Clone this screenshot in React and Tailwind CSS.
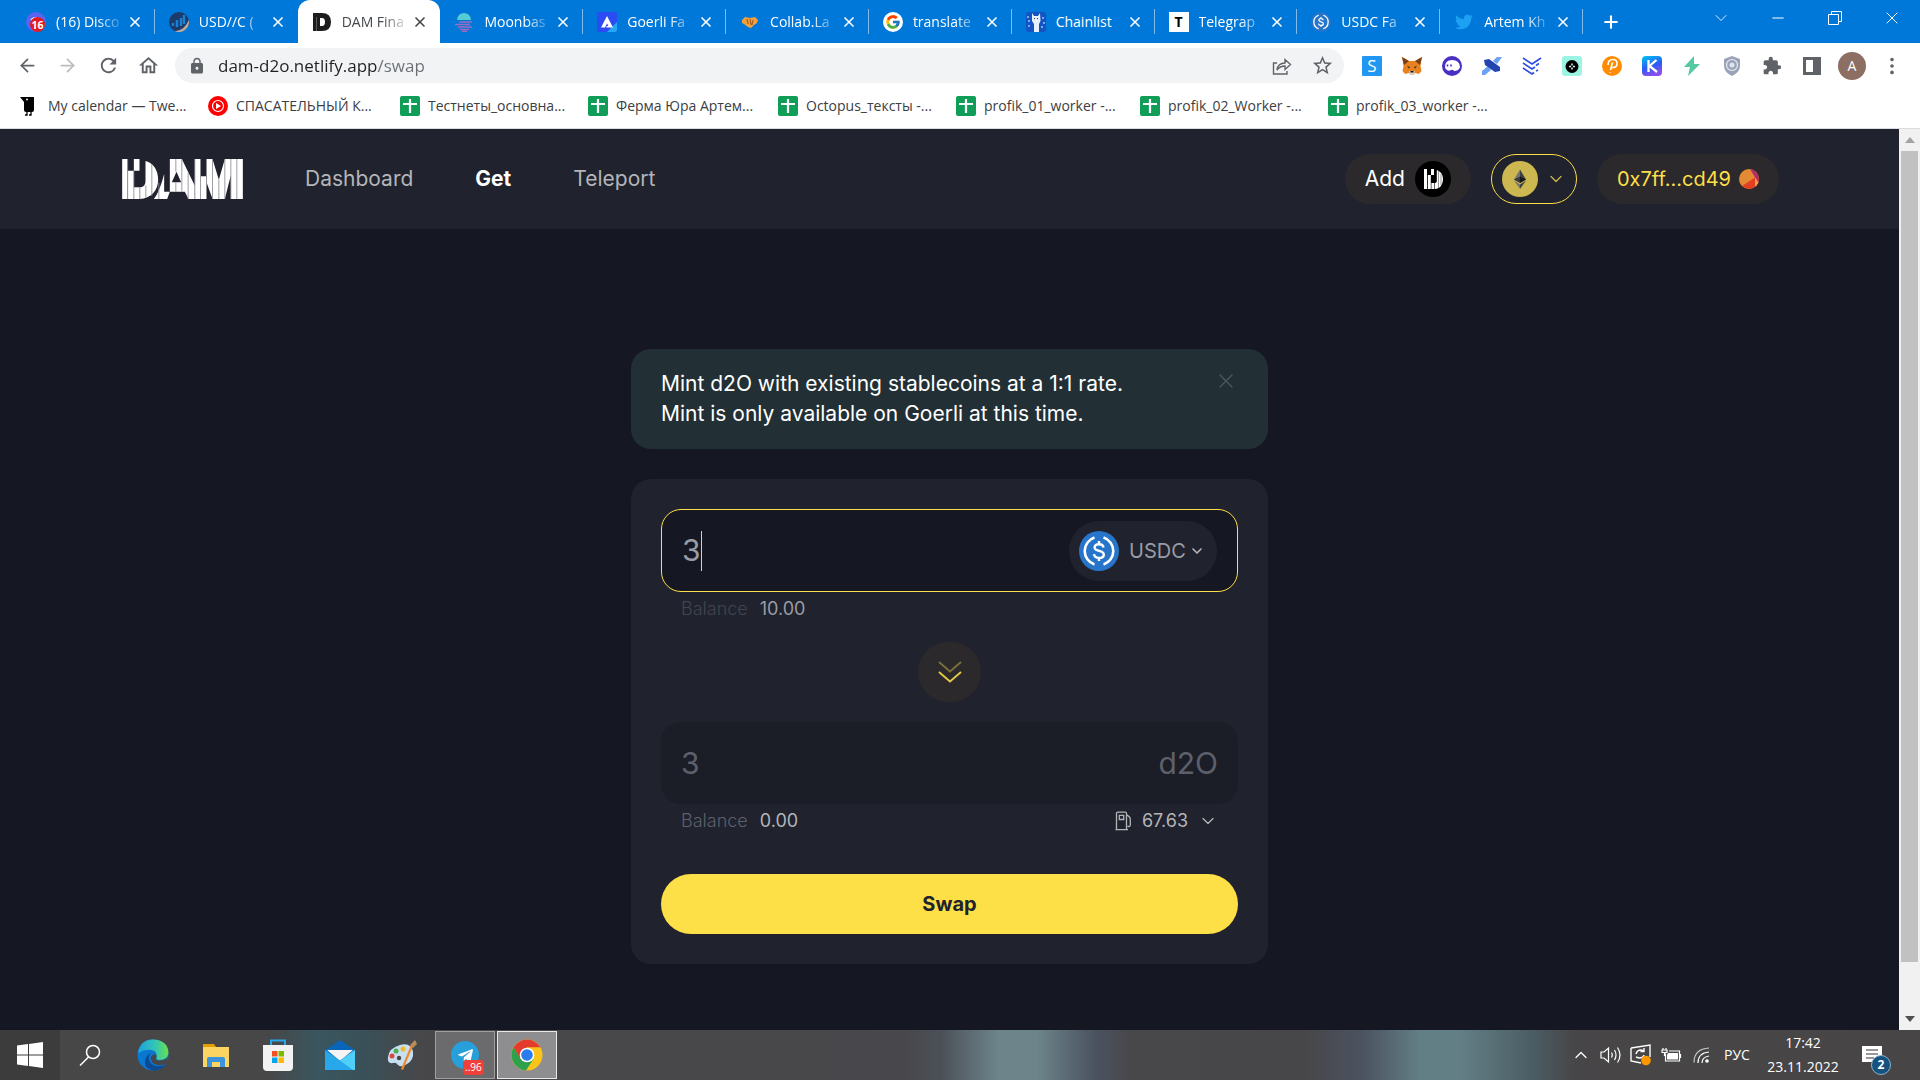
// src/App.jsx
import { useState } from "react";
import {
    ArrowLeft,
    ArrowRight,
    ChevronDown,
    ChevronUp,
    EllipsisVertical,
    Minus,
    Plus,
    X,
} from "lucide-react";
import { FcGoogle } from "react-icons/fc";
import { FaTwitter, FaTelegramPlane } from "react-icons/fa";
import { MdRefresh, MdLock, MdExtension, MdOutlineHome, MdStarBorder } from "react-icons/md";

/* ---------- logos ---------- */

const DamLogo = () => (
    <svg viewBox="22 27 362 120" className="w-[121px] h-10" fill="#fff" aria-label="DAM">
        <path d="M22 27h16v120H22zM39 62h18v85H39zM57 27h17v35H57zM57 112h18v35H57z" />
        <path d="M92 33c25 6 38 30 38 56 0 32-22 56-55 58v-35c12-1 17-8 17-20z" />
        <path d="M148 72v75h-31c12-14 22-42 31-75zM148 125h17l-8 22h-9z" />
        <path fillRule="evenodd" d="M165 27h36l39 80v40h-19l-11-22h-45zM185 65l-14 32h28z" />
        <path d="M240 27h17v120h-17zM257 79h18v68h-18z" />
        <path d="M275 27h18l19 62 18-62h54v120h-36V76l-18 71h-37l-18-50z" />
        <path
            d="M38.500 27v120M57 62v85M75 112v35M93 106v37M111 42v96M132 98v49M183 27v38M183 97v28M201 27v98M220 68v79M240 27v120M257 27v120M275 27v120M293 27v120M312 90v57M330 27v120M348 27v120M366 27v120"
            stroke="#8b8c93"
            strokeWidth="2.500"
            fill="none"
        />
    </svg>
);

const DamCoin = () => (
    <svg viewBox="0 0 36 36" className="size-9">
        <circle cx="18" cy="18" r="18" fill="#000" />
        <path
            d="M9 8h3v20H9zM12.800 14h3v14h-3zM16 8h3v6h-3zM16.400 22h3v6h-3zM20 8.500c5 1 8 4.500 8 9.500 0 6-3.500 10-8 10v-6c1.500 0 1.800-1 1.800-2.500V9z"
            fill="#fff"
        />
        <path d="M23.500 10v17M26 13v11" stroke="#555" strokeWidth=".6" />
    </svg>
);

const EthCoin = () => (
    <svg viewBox="0 0 36 36" className="size-9">
        <circle cx="18" cy="18" r="18" fill="#cdb750" />
        <path d="M18 8.500v13.500l-6-3.600z" fill="#74746f" />
        <path d="M18 8.500v13.500l6-3.600z" fill="#3f4042" />
        <path d="M18 15.500v6.500l-6-3.600z" fill="#3a3a3b" />
        <path d="M18 15.500v6.500l6-3.600z" fill="#17181b" />
        <path d="M18 23.500V28l-6-8.400z" fill="#74746f" />
        <path d="M18 23.500V28l6-8.400z" fill="#3f4042" />
    </svg>
);

const WalletAvatar = () => (
    <svg viewBox="0 0 20 20" className="size-5">
        <clipPath id="avatar">
            <circle cx="10" cy="10" r="10" />
        </clipPath>
        <g clipPath="url(#avatar)">
            <path d="M0 0h20v20H0z" fill="#e58a34" />
            <path d="M11 0l9 15V0z" fill="#b62c66" />
            <path d="M16 8.500L3 17l5 3h8z" fill="#e33f22" />
            <path d="M16 8.500l4 6-4 5.500z" fill="#f0a03c" />
        </g>
    </svg>
);

const UsdcCoin = ({ className }) => (
    <svg viewBox="0 0 40 40" className={className} fill="none" stroke="#fff">
        <circle cx="20" cy="20" r="20" fill="#2775ca" stroke="none" />
        <path d="M15.500 6.500a14.200 14.200 0 0 0 0 27M24.500 6.500a14.200 14.200 0 0 1 0 27" strokeWidth="2.600" />
        <path
            d="M24.500 16.500c-.3-2.300-2-3.300-4.500-3.300-2.700 0-4.400 1.200-4.400 3.200 0 4.600 9.200 2.200 9.200 7 0 2.200-1.900 3.500-4.800 3.500-2.800 0-4.700-1.200-5-3.700M20 10v3.400M20 26.600V30"
            strokeWidth="2.400"
        />
    </svg>
);

const DoubleArrow = () => (
    <svg viewBox="0 0 24 24" className="size-6" fill="none" strokeWidth="1.800">
        <path d="M1 2l11 9.500L23 2" stroke="#7d7038" />
        <path d="M1 12l11 9.500L23 12" stroke="#e6cb48" />
    </svg>
);

const GasPump = () => (
    <svg viewBox="0 0 17 20" className="w-[17px] h-5" fill="none" stroke="#b4b5b8" strokeWidth="1.300">
        <path d="M1.500 18.500V2.500q0-1.300 1.300-1.300h7.400q1.300 0 1.300 1.300v16M.5 18.700h12.500M4.300 4.300h4.400v4.200H4.300zM11.500 3.500l3 2.500q.8 1 .8 3v5q0 1.500-1.400 1.500h-1.400" />
    </svg>
);

/* ---------- browser icons ---------- */

const DiscordIcon = () => (
    <svg viewBox="0 0 20 20" className="size-5">
        <circle cx="10" cy="10" r="10" fill="#5865f2" />
        <path d="M5 8q5-4 10 0" stroke="#fff" strokeWidth="2" fill="none" />
        <circle cx="11.500" cy="12.500" r="7.500" fill="#e01b24" />
        <text x="11.500" y="16.500" textAnchor="middle" fontSize="10.500" fontWeight="700" fill="#fff">16</text>
    </svg>
);

const UsdChartIcon = () => (
    <svg viewBox="0 0 20 20" className="size-5">
        <circle cx="10" cy="10" r="10" fill="#1e3a6b" />
        <path d="M4 11v3M8 8v7M12 6v8M15 3v9" stroke="#1583d8" strokeWidth="2.400" />
        <path d="M19.800 8A10 10 0 0 1 6 19.200Q16 18 19.800 8z" fill="#b5a9a0" />
    </svg>
);

const DamTabIcon = () => (
    <svg viewBox="0 0 20 20" className="size-5">
        <path fillRule="evenodd" d="M1 1h9q9 0 9 9t-9 9H1zM8 6v8h2q3 0 3-4t-3-4z" fill="#1d1d1d" />
        <path d="M4.500 5v14" stroke="#777" strokeWidth=".7" />
    </svg>
);

const MoonbaseIcon = () => (
    <svg viewBox="0 0 20 20" className="size-5">
        <path d="M3 8a7 7 0 0 1 14 0z" fill="#55cbd3" />
        <path d="M5 10h13M1 12.500h15M4 15h14M6 17.500h9M8 19.500h5" stroke="#9d6bc0" strokeWidth="1.300" />
    </svg>
);

const GoerliIcon = () => (
    <svg viewBox="0 0 20 20" className="size-5">
        <rect width="20" height="20" rx="2" fill="#2b4cf5" />
        <path d="M10 20h8q2 0 2-2v-8z" fill="#25a7f8" />
        <path d="M10 4L4 15.500h4l2-4 1.500 2.500h-2v1.500H16z" fill="#fff" />
    </svg>
);

const CollabIcon = () => (
    <svg viewBox="0 0 20 20" className="size-5">
        <path d="M2 8l3-3 5 1 5-1 3 3-1 3-3 2-3 3-3-1-4-3-2-1z" fill="#f0a03c" />
        <path d="M7 7l1 5M10 7l1 6M13 8l-1 5" stroke="#a85a1e" strokeWidth="1.200" />
    </svg>
);

const ChainlistIcon = () => (
    <svg viewBox="0 0 20 20" className="size-5">
        <rect width="20" height="20" rx="3" fill="#1453c4" />
        <path d="M6 1l2 3h4l2-3 .5 8L13 12v8H8v-8L6 9z" fill="#e8f1fb" />
        <path d="M2 5v.1M3 9v.1M17 6v.1M18 11v.1M3 14v.1M16 15v.1" stroke="#9cc4f5" strokeWidth="2" strokeLinecap="round" />
        <path d="M8.500 6.500v.1M11.500 6.500v.1" stroke="#222" strokeWidth="1.200" strokeLinecap="round" />
    </svg>
);

const TelegraphIcon = () => (
    <span className="size-5 bg-white text-black text-sm leading-5 font-bold text-center">T</span>
);

const CalendarBird = () => (
    <svg viewBox="0 0 20 20" className="size-5">
        <path d="M0 1h14v13q0 2-2 2H6q-2 0-2-2V6z" fill="#000" />
        <path d="M7 16v3H5M11 16v3H9" stroke="#000" strokeWidth="1.300" fill="none" />
        <circle cx="7" cy="3.500" r=".9" fill="#fff" />
    </svg>
);

const MusicIcon = () => (
    <svg viewBox="0 0 20 20" className="size-5">
        <circle cx="10" cy="10" r="10" fill="#f00" />
        <circle cx="10" cy="10" r="5.500" fill="none" stroke="#fff" strokeWidth="1.200" />
        <path d="M8 7l5 3-5 3z" fill="#fff" />
    </svg>
);

const SheetIcon = () => (
    <svg viewBox="0 0 20 20" className="size-5">
        <rect width="20" height="20" rx="2" fill="#0f9d58" />
        <path d="M10 3v14M3 8h14" stroke="#fff" strokeWidth="2.200" />
    </svg>
);

const ShareIcon = () => (
    <svg viewBox="0 0 20 20" className="size-5" fill="none" stroke="#5f6368" strokeWidth="1.400">
        <path d="M5 7H1.500v11H15v-3M5 14q1-7 8-7V3.500l5.500 5-5.500 5V10q-5 0-8 4z" />
    </svg>
);

const ext = {
    s: (
        <svg viewBox="0 0 20 20" className="size-5">
            <rect width="20" height="20" rx="1" fill="#2196f3" />
            <text x="10" y="16" textAnchor="middle" fontSize="17" fill="#fff">S</text>
        </svg>
    ),
    fox: (
        <svg viewBox="0 0 20 20" className="size-5">
            <path d="M0 1l7 4h6l7-4-1.500 9 1 5-2.500 3-4-1-2 2H9l-2-2-4 1-2.500-3 1-5z" fill="#e8821e" />
            <path d="M0 1l7 4-5 4zM20 1l-7 4 5 4z" fill="#7a3f16" />
            <path d="M5 10l3 1-1 1.500zM15 10l-3 1 1 1.500z" fill="#222" />
            <path d="M7 15h6l-1 4H8z" fill="#d9cdc4" />
            <path d="M8.500 15h3v1.500h-3z" fill="#161616" />
        </svg>
    ),
    ghost: (
        <svg viewBox="0 0 20 20" className="size-5">
            <circle cx="10" cy="10" r="10" fill="#4b2fc4" />
            <path d="M3 11q0-7 7-7 7.500 0 8 7-1 4-6 4-1-2-4-.5-2 .5-3-.5-2-1-2-3z" fill="#fff" />
            <path d="M5.500 8.500v2M9 8.500v2" stroke="#4b2fc4" strokeWidth="1.600" />
        </svg>
    ),
    satellite: (
        <svg viewBox="0 0 20 20" className="size-5">
            <path d="M11 5l4-4h5l-5 7zM0 15l6-5 3 4-6 5H0z" fill="#6aa3f5" />
            <path d="M2 4l5-1 11 8v4l-5 1L3 9z" fill="#2444b0" />
        </svg>
    ),
    chevrons: (
        <svg viewBox="0 0 20 20" className="size-5" fill="none" stroke="#2f4fe0" strokeWidth="1.700">
            <path d="M1 2l9 6 9-6M1 7l9 6 3-2M1 12l9 6 2-1.500M14 9.500l3-2M14 15l2-1M17.500 12v.1" />
        </svg>
    ),
    okx: (
        <svg viewBox="0 0 20 20" className="size-5">
            <rect width="20" height="20" rx="3" fill="#9cf5e4" />
            <circle cx="10" cy="10.500" r="6.500" fill="#000" />
            <path d="M10 7.500v2M10 11.500v2M7 10.500h2M11 10.500h2" stroke="#cfeee8" strokeWidth="1.500" />
        </svg>
    ),
    polkadot: (
        <svg viewBox="0 0 20 20" className="size-5">
            <circle cx="10" cy="10" r="10" fill="#ff8c00" />
            <path d="M6 9q0-5.500 5-5.500 4 0 4 4T11 11.500H9.500M10.500 6.500L8.500 14M8 16v.8" fill="none" stroke="#fff" strokeWidth="1.600" />
        </svg>
    ),
    keplr: (
        <svg viewBox="0 0 20 20" className="size-5">
            <linearGradient id="keplr" x1="0" y1="0" x2=".4" y2="1">
                <stop offset="0" stopColor="#00c8f5" />
                <stop offset=".6" stopColor="#2a5cf0" />
                <stop offset="1" stopColor="#8a4ff0" />
            </linearGradient>
            <rect width="20" height="20" rx="4" fill="url(#keplr)" />
            <path d="M6.500 4v12M14.500 4l-7 6 7.500 6" stroke="#fff" strokeWidth="2.300" fill="none" />
        </svg>
    ),
    bolt: (
        <svg viewBox="0 0 20 20" className="size-5">
            <path d="M12 0L2 11h6l-2 9L18 8h-6z" fill="#55c9a0" />
        </svg>
    ),
    shield: (
        <svg viewBox="0 0 20 20" className="size-5">
            <path d="M10 0l8 3v7q0 6-8 10-8-4-8-10V3z" fill="#9aa3b8" />
            <circle cx="10" cy="9" r="5.500" fill="none" stroke="#e8ebf2" strokeWidth="1.200" />
            <circle cx="10" cy="9" r="2.500" fill="#dfe3ec" />
        </svg>
    ),
    puzzle: <MdExtension className="size-5 text-[#5f6368]" />,
    panel: (
        <svg viewBox="0 0 20 20" className="size-5">
            <path fillRule="evenodd" d="M1 1h18v18H1zM4 4v12h7V4z" fill="#5f6368" />
        </svg>
    ),
};

/* ---------- taskbar icons ---------- */

const WindowsIcon = () => (
    <svg viewBox="0 0 26 26" className="size-[26px]" fill="#fff">
        <path d="M0 3.500l11-1.500v10.500H0zM12 2l14-2v12.500H12zM0 13.500h11V24L0 22.500zM12 13.500h14V26l-14-2z" />
    </svg>
);

const SearchIcon = () => (
    <svg viewBox="0 0 22 22" className="size-[22px]" fill="none" stroke="#fff" strokeWidth="1.500">
        <circle cx="14" cy="8" r="6.500" />
        <path d="M9.500 13L1 21.500" />
    </svg>
);

const EdgeIcon = () => (
    <svg viewBox="0 0 32 32" className="size-8">
        <linearGradient id="edge" x1="0" x2="1">
            <stop offset="0" stopColor="#1ba0e2" />
            <stop offset=".6" stopColor="#35c8b0" />
            <stop offset="1" stopColor="#6be04a" />
        </linearGradient>
        <circle cx="16" cy="16" r="15.500" fill="#0b78d0" />
        <path d="M1 14Q3 .5 16 .5 31 1 31.500 14q-1 7-9 7-4 0-3-3 1-6-5-7-7-1-13 3z" fill="url(#edge)" />
        <path d="M14 14q-4 4-1 9t10 4q4 0 6-2-5 7-13 6.500Q7 30 8 22q1-6 6-8z" fill="#0c4a94" />
        <path d="M17 15q4 1 2 4-1 2 3 2.500 6 0 9-3l-1 6q-6 3-12 1-5-3-4-8z" fill="#474749" />
    </svg>
);

const FolderIcon = () => (
    <svg viewBox="0 0 28 28" className="size-7">
        <path d="M1 3h11l2 3H1z" fill="#e0a000" />
        <path d="M1 6h26v20H1z" fill="#fcd462" />
        <path d="M5 26v-8q0-2 2-2h14q2 0 2 2v8h-5v-5h-8v5z" fill="#3c94dd" />
    </svg>
);

const StoreIcon = () => (
    <svg viewBox="0 0 30 32" className="w-[30px] h-8">
        <path d="M8 7V1.500h14V7" fill="none" stroke="#28a8ea" strokeWidth="2" />
        <path d="M0 6h30v22q0 4-4 4H4q-4 0-4-4z" fill="#f2f2f2" />
        <path d="M9 12h5.500v5.500H9z" fill="#f25022" />
        <path d="M15.500 12H21v5.500h-5.500z" fill="#7fba00" />
        <path d="M9 18.500h5.500V24H9z" fill="#00a4ef" />
        <path d="M15.500 18.500H21V24h-5.500z" fill="#ffb900" />
    </svg>
);

const MailIcon = () => (
    <svg viewBox="0 0 30 32" className="w-[30px] h-8">
        <path d="M0 11L15 1l15 10v4H0z" fill="#0a64b8" />
        <path d="M2 11h26L15 22z" fill="#f4f4f4" />
        <path d="M0 11l15 10.500L30 11v20H0z" fill="#28a8ea" />
        <path d="M30 11L15 21.500 28 31h2z" fill="#50d0f8" />
    </svg>
);

const PaintIcon = () => (
    <svg viewBox="0 0 32 32" className="size-8">
        <path d="M14 6q11-3 13 7 1 8-6 12-6 4-9 1-2-3-5-2-6 1-5-6Q3 9 14 6z" fill="#c6e0f2" />
        <circle cx="6" cy="17" r="2.500" fill="#e0463c" />
        <circle cx="10" cy="12" r="2.500" fill="#4cae4f" />
        <circle cx="17" cy="10" r="2.500" fill="#f2b632" />
        <circle cx="13" cy="19" r="2.200" fill="#474749" />
        <path d="M25 6l2 1-10 24-2-1z" fill="#ef8a2b" />
        <path d="M24 6l5-5 2 4-4 4z" fill="#b98a5a" />
    </svg>
);

const ChromeIcon = () => (
    <svg viewBox="0 0 32 32" className="size-8">
        <circle cx="16" cy="16" r="15.500" fill="#fcc419" />
        <path d="M2.600 8.300A15.500 15.500 0 0 1 29.400 8.300H16L9 20z" fill="#e33b2e" />
        <path d="M2.600 8.300A15.500 15.500 0 0 0 15 31.500L22.500 20 9.500 20z" fill="#2da14b" />
        <circle cx="16" cy="16" r="7.300" fill="#fff" />
        <circle cx="16" cy="16" r="5.800" fill="#2a7bec" />
    </svg>
);

const SpeakerIcon = () => (
    <svg viewBox="0 0 22 20" className="w-[22px] h-5" fill="none" stroke="#fff" strokeWidth="1.200">
        <path d="M1 7h3l4.500-4v14L4 13H1zM11.500 7.500q1.500 2.500 0 5M14.500 5q3 5 0 10M17.500 2.500q5 7.500 0 15" />
    </svg>
);

const UpdateIcon = () => (
    <svg viewBox="0 0 22 22" className="size-[22px]" fill="none" stroke="#fff" strokeWidth="1.400">
        <path d="M1 4l19-3v12M1 4v13l10 2M6 10q1-4 5-4l3 1M14 4v3.500h-3.500M14 11q-1 3-5 3l-3-1" />
        <circle cx="16" cy="16.500" r="4.800" fill="#ff9800" stroke="none" />
    </svg>
);

const BatteryIcon = () => (
    <svg viewBox="0 0 21 16" className="w-[21px] h-4" fill="none" stroke="#fff" strokeWidth="1.200">
        <path d="M4.500 6.500V14h14V4H8" />
        <path d="M7 6h10v6.500H6V8z" fill="#fff" stroke="none" />
        <path d="M19.500 7v4M1 3h5v2.500H1zM2 3V1M5 3V1M3.500 5.500V9" />
    </svg>
);

const WifiIcon = () => (
    <svg viewBox="0 0 17 17" className="size-[17px]" fill="none" stroke="#fff" strokeWidth="1.200">
        <path d="M1 15.500Q1 2 16 1" strokeOpacity=".7" />
        <path d="M5 16Q5 6 16 5M9 16q0-6 7-7" />
        <circle cx="14" cy="14" r="1.800" fill="#fff" stroke="none" />
    </svg>
);

/* ---------- data ---------- */

const tabs = [
    { title: "(16) Disco", icon: <DiscordIcon /> },
    { title: "USD//C (", icon: <UsdChartIcon /> },
    { title: "DAM Fina", icon: <DamTabIcon />, active: true },
    { title: "Moonbas", icon: <MoonbaseIcon /> },
    { title: "Goerli Fa", icon: <GoerliIcon /> },
    { title: "Collab.La", icon: <CollabIcon /> },
    { title: "translate", icon: <FcGoogle className="size-5 rounded-full bg-white p-0.5" /> },
    { title: "Chainlist", icon: <ChainlistIcon />, full: true },
    { title: "Telegrap", icon: <TelegraphIcon /> },
    { title: "USDC Fa", icon: <UsdcCoin className="size-5" /> },
    { title: "Artem Kh", icon: <FaTwitter className="size-5 p-px text-[#1da1f2]" /> },
];

const bookmarks = [
    { title: "My calendar — Twe...", icon: <CalendarBird />, width: "w-[188px]" },
    { title: "СПАСАТЕЛЬНЫЙ К...", icon: <MusicIcon />, width: "w-[192px]" },
    { title: "Тестнеты_основна...", icon: <SheetIcon />, width: "w-[188px]" },
    { title: "Ферма Юра Артем...", icon: <SheetIcon />, width: "w-[190px]" },
    { title: "Octopus_тексты -...", icon: <SheetIcon />, width: "w-[178px]" },
    { title: "profik_01_worker -...", icon: <SheetIcon />, width: "w-[184px]" },
    { title: "profik_02_Worker -...", icon: <SheetIcon />, width: "w-[188px]" },
    { title: "profik_03_worker -...", icon: <SheetIcon />, width: "w-[188px]" },
];

const navLinks = ["Dashboard", "Get", "Teleport"];

const TabStrip = () => (
    <div className="flex h-[43px] bg-[#0078d9] pl-3 text-white">
        <div className="flex flex-1 max-w-[1571px]">
            {tabs.map((tab, i) => (
                <div
                    key={tab.title}
                    className={
                        tab.active
                            ? "relative flex-1 flex items-center pl-[14px] pr-[10px] bg-white text-[#45484c] rounded-t-xl"
                            : "relative flex-1 flex items-center pl-[14px] pr-[10px]"
                    }
                >
                    {tab.icon}
                    <button
                        className={
                            tab.full
                                ? "flex-1 ml-[10px] whitespace-nowrap text-left text-sm"
                                : "flex-1 ml-[10px] whitespace-nowrap text-left text-sm mask-r-from-60%"
                        }
                    >
                        {tab.title}
                    </button>
                    <button aria-label={"Close " + tab.title} className="w-5 flex justify-center">
                        <X size={16} strokeWidth={2.500} />
                    </button>
                    {i !== 1 && i !== 2 && <span className="absolute right-0 top-[9px] h-[25px] w-px bg-[#7fbcec]" />}
                </div>
            ))}
        </div>
        <button aria-label="New tab" className="w-14 flex items-center justify-center">
            <Plus size={20} strokeWidth={2.500} />
        </button>
        <div className="ml-auto flex h-9 items-center">
            <button aria-label="Search tabs" className="w-[57px] flex justify-center"><ChevronDown size={20} strokeWidth={1} /></button>
            <button aria-label="Minimize" className="w-[57px] flex justify-center"><Minus size={18} strokeWidth={1.500} /></button>
            <button aria-label="Restore" className="w-[57px] flex justify-center">
                <svg viewBox="0 0 14 14" className="size-[14px]" fill="none" stroke="#fff">
                    <path d="M.5 3.500h10v10H.5zM3.500 3.500v-3h10v10h-3" />
                </svg>
            </button>
            <button aria-label="Close" className="w-[57px] flex justify-center"><X size={20} strokeWidth={1.200} /></button>
        </div>
    </div>
);

const Toolbar = () => (
    <div className="flex items-center h-[45px] bg-white pl-[17px] text-[#5f6368]">
        <button aria-label="Back" className="w-10"><ArrowLeft size={21} /></button>
        <button aria-label="Forward" className="w-10 text-[#babcbe]"><ArrowRight size={21} /></button>
        <button aria-label="Reload" className="w-10"><MdRefresh size={23} /></button>
        <button aria-label="Home" className="w-[38px]"><MdOutlineHome size={23} /></button>
        <div className="flex-1 flex items-center h-[35px] rounded-full bg-[#f1f3f4] pl-[13px] pr-0.5">
            <MdLock size={18} />
            <input
                aria-label="Address"
                defaultValue="dam-d2o.netlify.app/swap"
                className="flex-1 ml-3 text-[17px] outline-none text-transparent bg-clip-text bg-linear-to-r from-[#202124] from-[160px] to-[#6b6f74] to-[160px]"
            />
            <button aria-label="Share" className="w-10 flex justify-center"><ShareIcon /></button>
            <button aria-label="Bookmark" className="w-10 flex justify-center"><MdStarBorder size={23} /></button>
        </div>
        <div className="flex items-center ml-2 mr-2">
            {Object.keys(ext).map((name) => (
                <button key={name} aria-label={name} className="w-10 flex justify-center">{ext[name]}</button>
            ))}
            <button aria-label="Profile" className="w-10 flex justify-center">
                <span className="size-7 rounded-full bg-[#8d6e63] text-white text-sm leading-7">A</span>
            </button>
            <button aria-label="Menu" className="w-10 flex justify-center"><EllipsisVertical size={22} /></button>
        </div>
    </div>
);

const BookmarksBar = () => (
    <div className="flex h-[41px] bg-white border-b border-[#dadce0] pl-5 pt-2">
        {bookmarks.map((b) => (
            <a key={b.title} href="#" className={"flex items-center gap-2 h-5 text-sm text-[#3c4043] whitespace-nowrap " + b.width}>
                {b.icon}
                {b.title}
            </a>
        ))}
    </div>
);

const Header = () => (
    <header className="flex items-center h-[100px] pl-[122px] pr-[120px] bg-[#20222d] text-[21px]">
        <DamLogo />
        <nav className="flex gap-[62px] ml-[62px]">
            {navLinks.map((link) => (
                <a key={link} href="#" className={link === "Get" ? "font-bold text-white" : "text-[#b4b5b9]"}>
                    {link}
                </a>
            ))}
        </nav>
        <div className="ml-auto flex items-center gap-5">
            <button className="flex items-center gap-[10px] h-[50px] px-5 rounded-full bg-[#2b292c] text-white">
                Add
                <DamCoin />
            </button>
            <button aria-label="Network" className="flex items-center gap-2 h-[50px] px-[10px] rounded-full border border-[#fddf47] text-[#cdb750]">
                <EthCoin />
                <ChevronDown size={20} strokeWidth={1.500} />
            </button>
            <button className="flex items-center gap-2 h-[50px] px-5 rounded-full bg-[#2b292c] text-[#fddf47] text-xl">
                0x7ff...cd49
                <WalletAvatar />
            </button>
        </div>
    </header>
);

const SwapCard = () => {
    const [amount, setAmount] = useState("3");

    return (
        <div className="mt-[30px] rounded-[20px] bg-[#20222d] p-[30px]">
            <div className="flex items-center h-[83px] rounded-[20px] border border-[#fddf47] bg-[#151722] px-5">
                <div className="flex-1 flex items-center">
                    <input
                        aria-label="Amount to swap"
                        value={amount}
                        onChange={(e) => setAmount(e.target.value)}
                        className="field-sizing-content text-[30px] text-[#9a9ca5] outline-none"
                    />
                    <span className="h-10 w-px bg-[#d0d1d5]" />
                </div>
                <div className="relative flex items-center h-[60px] w-[148px] rounded-full bg-[#20222d] pl-[10px]">
                    <UsdcCoin className="size-10" />
                    <select aria-label="Token" className="appearance-none flex-1 pl-[10px] text-xl text-[#9a9ca5] outline-none">
                        <option>USDC</option>
                    </select>
                    <ChevronDown size={16} strokeWidth={2.500} className="absolute right-[12px] text-[#b4b5b9] pointer-events-none" />
                </div>
            </div>
            <p className="flex gap-3 items-center h-[34px] pl-5 text-lg">
                <span className="font-light text-[#424550]">Balance</span>
                <span className="text-[#9a9ca5]">10.00</span>
            </p>

            <button aria-label="Switch direction" className="flex items-center justify-center mx-auto my-4 h-[60px] w-[63px] rounded-full bg-[#2b292c]">
                <DoubleArrow />
            </button>

            <div className="flex items-center h-[82px] mt-5 rounded-[20px] bg-[#1b1d27] px-5 text-[30px] text-[#5d606b]">
                <input aria-label="Amount received" value={amount} readOnly className="flex-1 min-w-0 outline-none" />
                <span>d2O</span>
            </div>
            <div className="flex items-center h-[34px] px-5 text-lg">
                <span className="font-light text-[#5d606b]">Balance</span>
                <span className="ml-3 text-[#b4b5b9]">0.00</span>
                <button className="ml-auto flex items-center gap-[10px] text-[#b4b5b9]">
                    <GasPump />
                    67.63
                    <ChevronDown size={20} strokeWidth={1.500} />
                </button>
            </div>

            <button className="mt-9 w-full h-[60px] rounded-full bg-[#fddf47] text-xl font-bold text-[#20222d]">
                Swap
            </button>
        </div>
    );
};

const Scrollbar = () => (
    <div className="flex flex-col items-center w-[21px] bg-[#f1f1f1]">
        <svg viewBox="0 0 10 6" className="w-[10px] h-[6px] my-2" fill="#a3a3a3"><path d="M5 0l5 6H0z" /></svg>
        <div className="w-[17px] flex-1 bg-[#c1c1c1]" />
        <svg viewBox="0 0 10 6" className="w-[10px] h-[6px] mt-[54px] mb-2" fill="#505050"><path d="M5 6l5-6H0z" /></svg>
    </div>
);

const Taskbar = () => (
    <footer className="flex items-center h-[50px] text-white bg-linear-to-r from-[#474747] via-[#48474b] to-[#474545]">
        <div className="flex flex-1 items-center h-full bg-[linear-gradient(90deg,transparent_14%,#3a565f_16.500%,#3a5058_19%,transparent_22%,transparent_47%,#4b5058_49%,#6d848b_52%,#6d848b_54%,#4b5360_57%,transparent_59%,transparent_68%,#4b5360_71%,#637f86_74%,#637f86_76%,#4a5b62_80%,transparent_82%)]">
            <button aria-label="Start" className="w-[60px] h-full flex items-center justify-center bg-black/15"><WindowsIcon /></button>
            <button aria-label="Search" className="w-[60px] flex justify-center"><SearchIcon /></button>
            <button aria-label="Edge" className="w-[66px] flex justify-center"><EdgeIcon /></button>
            <button aria-label="Files" className="w-[60px] flex justify-center"><FolderIcon /></button>
            <button aria-label="Store" className="w-16 flex justify-center"><StoreIcon /></button>
            <button aria-label="Mail" className="w-[60px] flex justify-center"><MailIcon /></button>
            <button aria-label="Paint" className="w-16 flex justify-center"><PaintIcon /></button>
            <button aria-label="Telegram" className="relative w-[60px] h-12 ml-px flex items-center justify-center bg-[#6b6b6d] border border-[#a0a0a0]">
                <span className="size-7 rounded-full bg-[#279fda] flex items-center justify-center"><FaTelegramPlane size={17} /></span>
                <span className="absolute left-[27px] top-[28px] h-[15px] px-[2px] rounded bg-[#ee3f38] text-[10px] leading-[15px]">..96</span>
            </button>
            <button aria-label="Chrome" className="w-[60px] h-12 ml-[2px] flex items-center justify-center bg-[#8e8e90] border border-[#e8e8e8]">
                <ChromeIcon />
            </button>

            <div className="ml-auto flex items-center">
                <button aria-label="Hidden icons" className="w-[31px] flex justify-center"><ChevronUp size={20} strokeWidth={1.500} /></button>
                <button aria-label="Volume" className="w-[30px] flex justify-center"><SpeakerIcon /></button>
                <button aria-label="Updates" className="w-[30px] flex justify-center"><UpdateIcon /></button>
                <button aria-label="Battery" className="w-[30px] flex justify-center"><BatteryIcon /></button>
                <button aria-label="Wi-Fi" className="w-[30px] flex justify-center"><WifiIcon /></button>
                <button className="w-[42px] text-sm">РУС</button>
                <button className="w-[90px] text-sm leading-6 text-center">
                    17:42
                    <br />
                    23.11.2022
                </button>
                <button aria-label="Notifications" className="w-12 mr-6 flex justify-center">
                    <span className="relative">
                        <svg viewBox="0 0 20 19" className="w-5 h-[19px]">
                            <path d="M0 0h20v16h-7l-3 3v-3H0z" fill="#fff" />
                            <path d="M4 4h12M4 8h12M4 12h8" stroke="#333" strokeWidth="1.200" />
                        </svg>
                        <span className="absolute left-[9px] top-[9px] size-5 rounded-full border border-[#8fb3cc] bg-[#15527f] text-xs leading-[18px] font-bold text-center">2</span>
                    </span>
                </button>
            </div>
        </div>
    </footer>
);

const App = () => {
    return (
        <div className="flex flex-col min-h-screen font-['Open_Sans',sans-serif]">
            <TabStrip />
            <Toolbar />
            <BookmarksBar />

            <div className="flex-1 flex bg-[#151722]">
                <div className="flex-1 font-['Inter',sans-serif]">
                    <Header />
                    <main className="max-w-[637px] mx-auto pt-[120px] pb-[66px]">
                        <div className="flex justify-between items-start rounded-[20px] bg-[#223035] px-[30px] py-5 text-white">
                            <p className="text-[21px] leading-[30px]">
                                Mint d2O with existing stablecoins at a 1:1 rate.
                                <br />
                                Mint is only available on Goerli at this time.
                            </p>
                            <button aria-label="Dismiss" className="text-[#4d595d]">
                                <X size={24} strokeWidth={1.200} />
                            </button>
                        </div>
                        <SwapCard />
                    </main>
                </div>
                <Scrollbar />
            </div>

            <Taskbar />
        </div>
    );
};

export default App;
